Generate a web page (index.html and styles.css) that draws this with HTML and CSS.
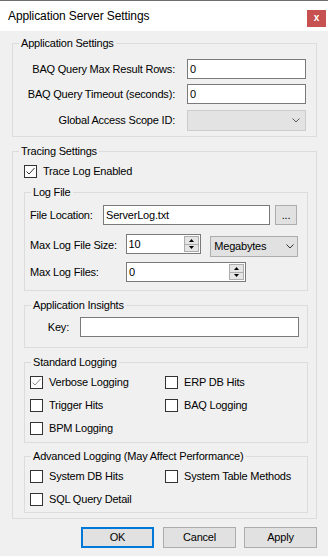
FILE: index.html
```html
<!DOCTYPE html>
<html lang="en">
<head>
	<meta charset="UTF-8">
	<title>Application Server Settings</title>
	<link rel="stylesheet" href="styles.css">
</head>
<body>
	<div id="dialog">
		<div class="titlebar">
			<span class="title">Application Server Settings</span>
			<span class="close">x</span>
		</div>

		<!-- application settings -->
		<fieldset class="group app-settings">
			<legend>Application Settings</legend>
			<div class="form-grid">
				<label>BAQ Query Max Result Rows:</label>
				<div class="textbox">0</div>
				<label>BAQ Query Timeout (seconds):</label>
				<div class="textbox">0</div>
				<label>Global Access Scope ID:</label>
				<div class="combo disabled">
					<span></span>
					<svg width="8" height="5" viewBox="0 0 8 5"><polyline points="0.5,0.5 4,4 7.5,0.5" fill="none" stroke="#555" stroke-width="1"/></svg>
				</div>
			</div>
		</fieldset>

		<!-- tracing settings -->
		<fieldset class="group tracing">
			<legend>Tracing Settings</legend>
			<div class="tracing-body">
				<div class="check">
					<span class="box"><svg width="11" height="11" viewBox="0 0 11 11"><polyline points="1.5,5.5 4,8 9.5,2" fill="none" stroke="#333" stroke-width="1"/></svg></span>
					<span>Trace Log Enabled</span>
				</div>

				<fieldset class="group sub log-file">
					<legend>Log File</legend>
					<div class="log-body">
						<div class="row">
							<label class="lbl-short">File Location:</label>
							<div class="textbox file-path">ServerLog.txt</div>
							<div class="button browse">...</div>
						</div>
						<div class="row size-row">
							<label class="lbl-long">Max Log File Size:</label>
							<div class="spinner small">
								<span class="value">10</span>
								<span class="spin">
									<span class="arrow"><svg width="5" height="3" viewBox="0 0 5 3"><polygon points="0,3 2.5,0 5,3" fill="#000"/></svg></span>
									<span class="arrow"><svg width="5" height="3" viewBox="0 0 5 3"><polygon points="0,0 5,0 2.5,3" fill="#000"/></svg></span>
								</span>
							</div>
							<div class="combo units">
								<span>Megabytes</span>
								<svg width="8" height="5" viewBox="0 0 8 5"><polyline points="0.5,0.5 4,4 7.5,0.5" fill="none" stroke="#333" stroke-width="1"/></svg>
							</div>
						</div>
						<div class="row files-row">
							<label class="lbl-long">Max Log Files:</label>
							<div class="spinner wide">
								<span class="value">0</span>
								<span class="spin">
									<span class="arrow"><svg width="5" height="3" viewBox="0 0 5 3"><polygon points="0,3 2.5,0 5,3" fill="#000"/></svg></span>
									<span class="arrow"><svg width="5" height="3" viewBox="0 0 5 3"><polygon points="0,0 5,0 2.5,3" fill="#000"/></svg></span>
								</span>
							</div>
						</div>
					</div>
				</fieldset>

				<fieldset class="group sub insights">
					<legend>Application Insights</legend>
					<div class="insights-body">
						<label class="lbl-key">Key:</label>
						<div class="textbox key"></div>
					</div>
				</fieldset>

				<fieldset class="group sub standard">
					<legend>Standard Logging</legend>
					<div class="check-grid">
						<div class="check">
							<span class="box"><svg width="11" height="11" viewBox="0 0 11 11"><polyline points="1.5,5.5 4,8 9.5,2" fill="none" stroke="#8a8a8a" stroke-width="1"/></svg></span>
							<span>Verbose Logging</span>
						</div>
						<div class="check"><span class="box"></span><span>ERP DB Hits</span></div>
						<div class="check"><span class="box"></span><span>Trigger Hits</span></div>
						<div class="check"><span class="box"></span><span>BAQ Logging</span></div>
						<div class="check"><span class="box"></span><span>BPM Logging</span></div>
					</div>
				</fieldset>

				<fieldset class="group sub advanced">
					<legend>Advanced Logging (May Affect Performance)</legend>
					<div class="check-grid">
						<div class="check"><span class="box"></span><span>System DB Hits</span></div>
						<div class="check"><span class="box"></span><span>System Table Methods</span></div>
						<div class="check"><span class="box"></span><span>SQL Query Detail</span></div>
					</div>
				</fieldset>
			</div>
		</fieldset>

		<div class="buttons">
			<div class="button default">OK</div>
			<div class="button cancel">Cancel</div>
			<div class="button apply">Apply</div>
		</div>
	</div>
</body>
</html>
```

FILE: styles.css
```css
*{margin: 0;padding: 0;box-sizing: border-box;}
body{
	background: #f0f0f0;
	font: 11px/13px "Liberation Sans", Arial, sans-serif;
	letter-spacing: -0.2px;
	color: #000;
}
#dialog{
	width: 328px;
	height: 556px;
}
.titlebar{
	display: flex;
	justify-content: space-between;
	align-items: flex-start;
	height: 31px;
	border-top: 1px solid #6f6f6f;
	background: #fff;
}
.title{
	padding-left: 8px;
	font-size: 12px;
	line-height: 30px;
	letter-spacing: -0.1px;
}
.close{
	width: 19px;
	height: 17px;
	margin: 9px 2px 0 0;
	background: #c75050;
	color: #fff;
	font-weight: bold;
	font-size: 10px;
	line-height: 16px;
	text-align: center;
	letter-spacing: 0;
}

/* group boxes */
.group{
	margin: 0 11px 0 12px;
	border: 1px solid #dcdcdc;
	min-width: 0;
}
.group legend{
	margin-left: 6px;
	padding: 0 2px;
	line-height: 13px;
}
.group.sub{
	margin: 8px 0 0 0;
}
.app-settings{
	margin-top: 6px;
}
.tracing{
	margin-top: 8px;
}
.tracing-body{
	padding: 7px 8px 5px 11px;
}
.advanced.sub{
	margin-top: 7px;
}

/* controls */
.textbox{
	height: 20px;
	padding: 0 2px;
	border: 1px solid #7a7a7a;
	background: #fff;
	line-height: 18px;
}
.combo{
	display: flex;
	justify-content: space-between;
	align-items: center;
	height: 21px;
	padding: 0 5px 0 3px;
	border: 1px solid #adadad;
	background: #e1e1e1;
}
.combo.disabled{
	border-color: #cccccc;
	background: #e3e3e3;
}
.button{
	display: flex;
	justify-content: center;
	align-items: center;
	border: 1px solid #adadad;
	background: #e1e1e1;
}
.check{
	display: flex;
	align-items: center;
	height: 13px;
}
.box{
	display: flex;
	width: 13px;
	height: 13px;
	margin-right: 6px;
	border: 1px solid #333;
	background: #fff;
}
.spinner{
	display: flex;
	height: 20px;
	border: 1px solid #7a7a7a;
	background: #fff;
}
.spinner .value{
	flex: 1;
	padding-left: 2px;
	line-height: 18px;
}
.spin{
	display: flex;
	flex-direction: column;
	width: 15px;
	margin: 1px;
}
.arrow{
	flex: 1;
	display: flex;
	justify-content: center;
	align-items: center;
	border: 1px solid #adadad;
	background: #e5e5e5;
}
.arrow + .arrow{
	border-top: none;
}

/* application settings */
.form-grid{
	display: grid;
	grid-template-columns: 162px 119px;
	column-gap: 12px;
	row-gap: 5px;
	align-items: center;
	padding: 9px 0 5px 0;
}
.form-grid label{
	text-align: right;
}
.form-grid .combo{
	margin-top: 1px;
}

/* log file */
.log-body{
	padding: 6px 9px 8px 5px;
}
.row{
	display: flex;
	align-items: center;
}
.lbl-short{
	width: 73px;
}
.lbl-long{
	width: 96px;
}
.file-path{
	width: 167px;
}
.browse{
	width: 22px;
	height: 20px;
	margin-left: 5px;
}
.size-row{
	align-items: flex-start;
	height: 23px;
	margin-top: 9px;
}
.size-row label{
	line-height: 23px;
}
.spinner.small{
	width: 76px;
}
.units{
	width: 88px;
	margin: 2px 0 0 9px;
	padding-right: 3px;
}
.files-row{
	margin-top: 5px;
}
.spinner.wide{
	width: 120px;
}

/* application insights */
.insights-body{
	display: flex;
	align-items: center;
	padding: 5px 8px 10px 0;
}
.lbl-key{
	width: 44px;
	margin-right: 11px;
	text-align: right;
}
.key{
	flex: 1;
}

/* check lists */
.check-grid{
	display: grid;
	grid-template-columns: 135px 1fr;
	row-gap: 10px;
	padding: 7px 0 7px 5px;
}
.advanced .check-grid{
	padding: 7px 0 6px 5px;
}

/* dialog buttons */
.buttons{
	display: flex;
	justify-content: flex-end;
	margin: 8px 11px 0 0;
}
.buttons .button{
	width: 73px;
	height: 21px;
}
.buttons .default{
	border: 2px solid #0078d7;
}
.buttons .cancel{
	margin-left: 9px;
}
.buttons .apply{
	margin-left: 8px;
}
```
